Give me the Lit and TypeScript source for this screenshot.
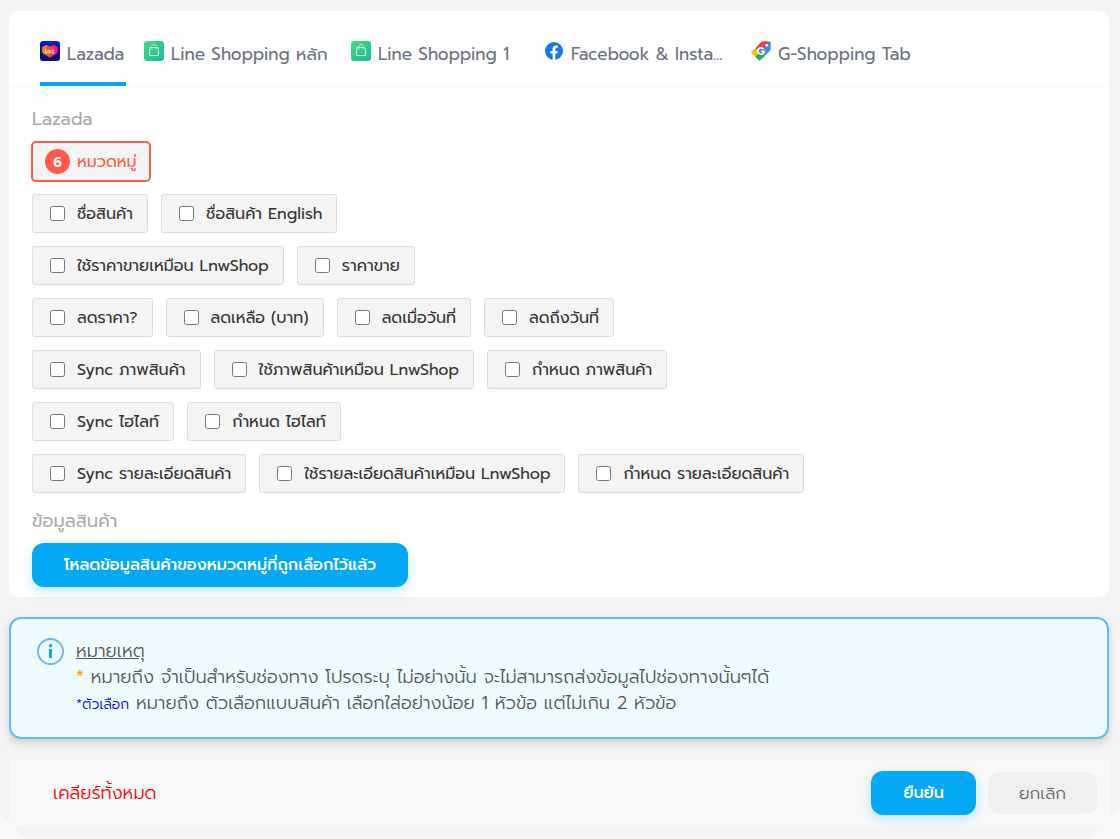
import { LitElement, html, css } from "lit";
import { customElement, state } from "lit/decorators.js";

type Tab = { id: string; label: string; icon: unknown };

const lazadaIcon = html`<svg class="icon" viewBox="0 0 20 20" aria-hidden="true">
  <defs>
    <linearGradient id="lzBg" x1="0" y1="0" x2="0" y2="1"><stop offset="0" stop-color="#0220c8"/><stop offset="1" stop-color="#0b0b66"/></linearGradient>
    <linearGradient id="lzHeart" x1="0" y1="0" x2="1" y2="0"><stop offset="0" stop-color="#ff9a00"/><stop offset=".45" stop-color="#ff4a1c"/><stop offset="1" stop-color="#f400a6"/></linearGradient>
  </defs>
  <rect width="20" height="20" rx="3" fill="url(#lzBg)"/>
  <path d="M2.2 6.2 L5.8 4.1 Q6.6 3.8 7.3 4.3 Q8.6 5.4 10 5.4 Q11.4 5.4 12.7 4.3 Q13.4 3.8 14.2 4.1 L17.8 6.2 V10.6 Q17.8 11.6 16.9 12.2 L10.7 16.3 Q10 16.7 9.3 16.3 L3.1 12.2 Q2.2 11.6 2.2 10.6 Z" fill="url(#lzHeart)"/>
  <path d="M5.6 7.8 V11.9 H7.2 M10 8.9 V12.3 M10 10.5 A1.1 1.3 0 1 0 7.8 10.5 A1.1 1.3 0 1 0 10 10.5 M11.6 9.2 H14 L11.7 11.9 H14.4" fill="none" stroke="#fff" stroke-width="1"/>
</svg>`;

const lineIcon = html`<svg class="icon" viewBox="0 0 20 20" aria-hidden="true">
  <defs><linearGradient id="lnBg" x1="0" y1="0" x2="1" y2="1"><stop offset="0" stop-color="#4bdb84"/><stop offset=".5" stop-color="#2fcb88"/><stop offset="1" stop-color="#19b9a6"/></linearGradient></defs>
  <rect width="20" height="20" rx="3" fill="url(#lnBg)"/>
  <path d="M5.9 6.5 H14.1 L14.6 14.5 H5.4 Z" fill="none" stroke="#d8f7e6" stroke-width="1"/>
  <path d="M7.8 8.6 V5.6 a2.2 2.2 0 0 1 4.4 0 V8.6" fill="none" stroke="#b6f0d2" stroke-width=".9"/>
</svg>`;

const facebookIcon = html`<svg class="icon" viewBox="0 0 20 20" aria-hidden="true">
  <circle cx="10" cy="10" r="9" fill="#1877f2"/>
  <path d="M8.6 19 V12.6 H6.3 V10 H8.6 V8 C8.6 5.7 10 4.5 12 4.5 C12.9 4.5 13.8 4.6 13.8 4.6 V6.8 H12.7 C11.6 6.8 11.3 7.5 11.3 8.2 V10 H13.7 L13.3 12.6 H11.3 V19 Z" fill="#fff"/>
</svg>`;

const googleIcon = html`<svg class="icon" viewBox="0 0 20 20" aria-hidden="true">
  <path d="M4 7.6 L10.4 1.1 Q11.2.3 12.3.3 L18.6.4 L16 7 L10 10.4 Z" fill="#ea4335"/>
  <path d="M18.2 .4 Q19.8.4 19.8 2 L19.6 8.2 Q19.5 9.2 18.8 9.9 L14.2 14.6 L10 10.4 L16 4.4 Z" fill="#4285f4"/>
  <path d="M14.3 14.5 L9.4 19.3 Q8.6 20 7.8 19.3 L4 15.5 L9.6 10 Z" fill="#34a853"/>
  <path d="M4.1 15.6 L.5 12 Q-.1 11.3.5 10.6 L4 7.4 L9.8 10 Z" fill="#fbbc04"/>
  <circle cx="10" cy="10.3" r="3.4" fill="#4285f4"/>
  <circle cx="15.7" cy="4.2" r="1.3" fill="#fff"/>
  <path d="M12.4 7.9 A3.2 3.2 0 1 0 13.2 10.4 H10.3" fill="none" stroke="#fff" stroke-width="1.6"/>
</svg>`;

const tabs: Tab[] = [
  { id: "lazada", label: "Lazada", icon: lazadaIcon },
  { id: "line-main", label: "Line Shopping หลัก", icon: lineIcon },
  { id: "line-1", label: "Line Shopping 1", icon: lineIcon },
  { id: "facebook", label: "Facebook & Insta...", icon: facebookIcon },
  { id: "google", label: "G-Shopping Tab", icon: googleIcon },
];

const optionRows: string[][] = [
  ["ชื่อสินค้า", "ชื่อสินค้า English"],
  ["ใช้ราคาขายเหมือน LnwShop", "ราคาขาย"],
  ["ลดราคา?", "ลดเหลือ (บาท)", "ลดเมื่อวันที่", "ลดถึงวันที่"],
  ["Sync ภาพสินค้า", "ใช้ภาพสินค้าเหมือน LnwShop", "กำหนด ภาพสินค้า"],
  ["Sync ไฮไลท์", "กำหนด ไฮไลท์"],
  ["Sync รายละเอียดสินค้า", "ใช้รายละเอียดสินค้าเหมือน LnwShop", "กำหนด รายละเอียดสินค้า"],
];

@customElement("app-root")
export class AppRoot extends LitElement {
  @state() private active = "lazada";

  static styles = css`
    :host {
      display: block; min-height: 100vh; box-sizing: border-box; padding: 11px 11px 12px 9px;
      background: linear-gradient(45deg, #f8f8f8 18px, transparent 19px), linear-gradient(-45deg, #f8f8f8 22px, transparent 23px), #f3f3f3;
      color: #333; font: 16px/26px Prompt, "Noto Sans Thai", Inter, "Noto Sans", sans-serif;
    }
    * { box-sizing: border-box; }
    button { font: inherit; border: 0; cursor: pointer; }
    .card { background: #fff; border-radius: 10px; padding-bottom: 10px; }
    .tabs { display: grid; grid-template-columns: 86px 189px 175px 189px auto; justify-content: start; gap: 18px; padding: 0 31px; height: 76px; border-bottom: 1px solid #f8f8f8; }
    .tab { display: flex; align-items: center; gap: 7px; padding: 14px 0 0; background: none; color: #6b7280; font-size: 17px; white-space: nowrap; border-bottom: 4px solid transparent; }
    .tab.active { border-bottom-color: #03a9f4; }
    .icon { width: 20px; height: 20px; flex: none; margin-bottom: 5px; }
    .body { padding: 19px 23px 0; }
    h2 { margin: 0; font-size: 18px; line-height: 26px; font-weight: 400; color: #aaa; }
    .category { display: flex; align-items: center; gap: 7px; height: 41px; margin: 9px -1px 12px; padding: 0 12px; border: 2px solid #ff5a4d; border-radius: 5px; background: #f4f4f4; color: #ff5a4d; }
    .count { width: 25px; height: 25px; border-radius: 50%; background: #ff5a4d; color: #fff; font-family: "Open Sans", sans-serif; font-size: 15px; font-weight: 700; line-height: 25px; text-align: center; }
    .rows { display: grid; gap: 13px; margin-bottom: 15px; }
    .row { display: flex; flex-wrap: wrap; gap: 13px; }
    .chip { display: flex; align-items: center; gap: 12px; height: 39px; padding: 0 14px 0 17px; border: 1px solid #ddd; border-radius: 3px; background: #f4f4f4; white-space: nowrap; }
    .chip input { width: 15px; height: 15px; margin: 0; }
    .primary { height: 44px; padding: 0 32px; border-radius: 12px; background: #03a9f4; color: #fff; font-weight: 500; box-shadow: 0 4px 12px rgba(3, 169, 244, .25); }
    .load { margin-top: 9px; }
    .note { display: flex; gap: 12px; margin-top: 20px; padding: 19px 26px; border: 2px solid #64b9f3; border-radius: 12px; background: #effaff; color: #555; font-size: 18px; font-weight: 300; line-height: 26px; box-shadow: 0 4px 8px rgba(0, 0, 0, .15); }
    .note p { margin: 0; }
    .info { width: 27px; height: 27px; flex: none; }
    .req { color: #ffa500; font-weight: 500; }
    .opt { color: #00f; font-size: 14px; }
    .footer { display: flex; align-items: center; gap: 12px; height: 69px; margin-top: 19px; padding: 0 12px 0 44px; border-top: 1px solid #eee; background: #f8f8f8; }
    .clear { margin-right: auto; padding: 0; background: none; color: #f00; font-size: 18px; font-weight: 300; }
    .cancel { height: 42px; padding: 0 31px; border-radius: 12px; background: #efefef; color: #666; font-size: 17px; font-weight: 300; }
  `;

  render() {
    return html`
      <main>
        <section class="card">
          <div class="tabs" role="tablist">
            ${tabs.map((t) => html`<button role="tab" aria-selected=${this.active === t.id ? "true" : "false"}
              class="tab ${this.active === t.id ? "active" : ""}" @click=${() => (this.active = t.id)}>${t.icon}<span>${t.label}</span></button>`)}
          </div>
          <div class="body">
            <h2>Lazada</h2>
            <button class="category"><span class="count">6</span><span>หมวดหมู่</span></button>
            <div class="rows">
              ${optionRows.map((row) => html`<div class="row">${row.map((o) => html`<label class="chip"><input type="checkbox" /><span>${o}</span></label>`)}</div>`)}
            </div>
            <h2>ข้อมูลสินค้า</h2>
            <button class="primary load">โหลดข้อมูลสินค้าของหมวดหมู่ที่ถูกเลือกไว้แล้ว</button>
          </div>
        </section>
        <aside class="note">
          <svg class="info" viewBox="0 0 27 27" aria-hidden="true"><circle cx="13.5" cy="13.5" r="12.5" fill="none" stroke="#64b9f3" stroke-width="2"/><circle cx="13.5" cy="7.8" r="1.8" fill="#03a9f4"/><rect x="12" y="11" width="3" height="9" fill="#03a9f4"/></svg>
          <div>
            <p><u>หมายเหตุ</u></p>
            <p><span class="req">*</span> หมายถึง จำเป็นสำหรับช่องทาง โปรดระบุ ไม่อย่างนั้น จะไม่สามารถส่งข้อมูลไปช่องทางนั้นๆได้</p>
            <p><span class="opt">*ตัวเลือก</span> หมายถึง ตัวเลือกแบบสินค้า เลือกใส่อย่างน้อย 1 หัวข้อ แต่ไม่เกิน 2 หัวข้อ</p>
          </div>
        </aside>
        <footer class="footer">
          <button class="clear">เคลียร์ทั้งหมด</button>
          <button class="primary">ยืนยัน</button>
          <button class="cancel">ยกเลิก</button>
        </footer>
      </main>
    `;
  }
}
